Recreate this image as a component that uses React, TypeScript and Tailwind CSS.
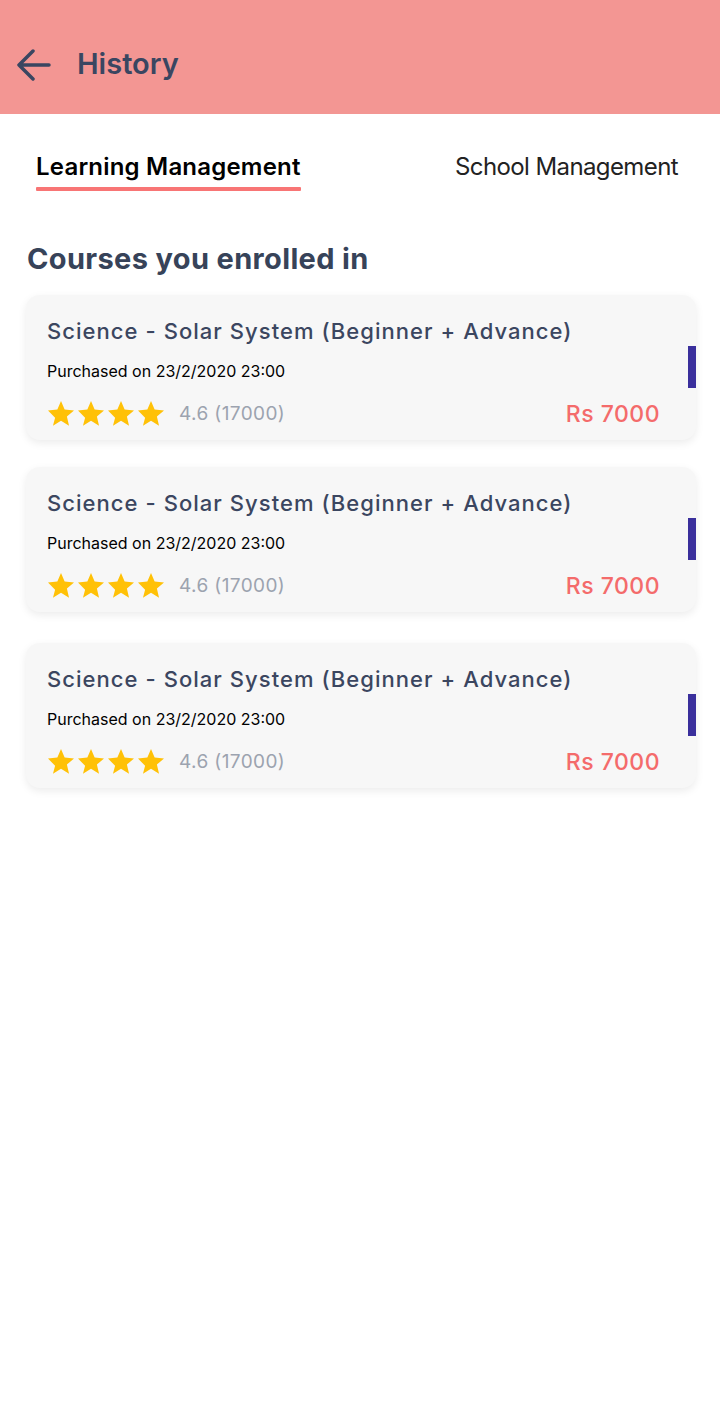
import React from "react";

const Star = () => (
  <svg width="26" height="26" viewBox="2 2 20 20">
    <path fill="#FFC107" d="M12 17.27L18.18 21l-1.64-7.03L22 9.24l-7.19-.61L12 2 9.19 8.63 2 9.24l5.46 5.73L5.82 21z" />
  </svg>
);

const Card = ({ className = "" }: { className?: string }) => (
  <div className={`relative rounded-[14px] bg-[#f7f7f7] shadow-[0_3px_8px_rgba(0,0,0,0.08)] h-[145px] pl-[21px] pr-[36px] pt-[21px] ${className}`}>
    <div className="text-[22px] leading-[30px] font-medium text-[#3b4660] tracking-[1.05px]">
      Science - Solar System (Beginner + Advance)
    </div>
    <div className="mt-[14px] text-[16px] leading-[22px] text-black">Purchased on 23/2/2020 23:00</div>
    <div className="mt-[17px] flex items-center justify-between h-[30px]">
      <div className="flex items-center">
        <div className="flex gap-[4px] pl-[1px]">
          <Star />
          <Star />
          <Star />
          <Star />
        </div>
        <span className="ml-[15px] text-[19px] tracking-[0.4px] text-[#9ca3af]">4.6 (17000)</span>
      </div>
      <span className="text-[23px] font-medium tracking-[0.5px] text-[#f46b6b]">Rs 7000</span>
    </div>
    <div className="absolute right-0 top-[51px] w-[8px] h-[42px] bg-[#3a2f9c]" />
  </div>
);

export default function App() {
  return (
    <div className="w-[720px] min-h-[1420px] bg-white" style={{ fontFamily: "Inter, 'Noto Sans', sans-serif" }}>
      <div className="h-[114px] bg-[#f39693] flex items-center pl-[17px] pt-[14px]">
        <svg width="34" height="34" viewBox="0 0 34 34" fill="none" stroke="#3a4661" strokeWidth="3.5" strokeLinecap="round" strokeLinejoin="round" className="mt-[2px]">
          <path d="M32 17H2M16 3L2 17l14 14" />
        </svg>
        <span className="ml-[26px] text-[29px] font-semibold text-[#3a4661]">History</span>
      </div>
      <div className="flex justify-between px-[36px] pr-[42px] pt-[36px]">
        <div className="flex flex-col">
          <span className="text-[24px] font-semibold text-black tracking-[0.2px] leading-[34px]">Learning Management</span>
          <div className="mt-[3px] h-[4px] bg-[#f87575] rounded-[1px]" />
        </div>
        <span className="text-[24px] text-[#222] tracking-[-0.6px] leading-[34px]">School Management</span>
      </div>
      <div className="px-[27px] pt-[51px] text-[29px] font-bold text-[#374359] leading-[34px] tracking-[0.35px]">
        Courses you enrolled in
      </div>
      <div className="px-[26px] pt-[19px] pr-[24px] flex flex-col">
        <Card />
        <Card className="mt-[27px]" />
        <Card className="mt-[31px]" />
      </div>
    </div>
  );
}
